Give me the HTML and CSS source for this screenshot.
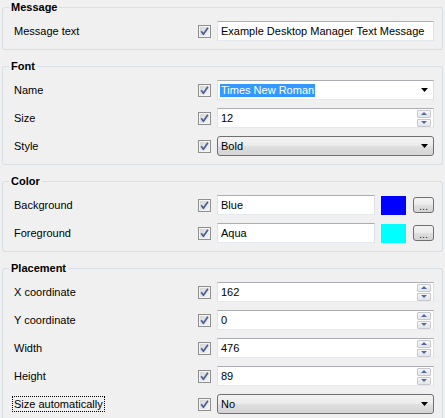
FILE: index.html
```html
<!DOCTYPE html>
<html>
<head>
<meta charset="utf-8">
<link rel="stylesheet" href="styles.css">
</head>
<body>
<svg width="0" height="0" style="position:absolute">
  <defs>
    <linearGradient id="cbg" x1="0" y1="0" x2="1" y2="1">
      <stop offset="0" stop-color="#d6d6d6"/>
      <stop offset="1" stop-color="#f4f4f4"/>
    </linearGradient>
    <symbol id="chk" viewBox="0 0 13 13">
      <rect x="0.5" y="0.5" width="12" height="12" fill="#f4f4f4" stroke="#8e8f8f"/>
      <rect x="2" y="2" width="9" height="9" fill="url(#cbg)"/>
      <path d="M3.2 6.2 L5.4 9.3 L9.9 2.8" fill="none" stroke="#4a5e96" stroke-width="1.7" stroke-linejoin="round"/>
    </symbol>
    <symbol id="arr" viewBox="0 0 7 4">
      <path d="M0 0 H7 L3.5 4 Z" fill="#000"/>
    </symbol>
  </defs>
</svg>

<fieldset class="group">
  <legend>Message</legend>
  <div class="rows">
    <span class="label">Message text</span>
    <svg class="check"><use href="#chk"/></svg>
    <div class="textbox">Example Desktop Manager Text Message</div>
  </div>
</fieldset>

<fieldset class="group">
  <legend>Font</legend>
  <div class="rows">
    <span class="label">Name</span>
    <svg class="check"><use href="#chk"/></svg>
    <div class="textbox edit-combo"><span class="sel">Times New Roman</span><svg class="arrow"><use href="#arr"/></svg></div>

    <span class="label">Size</span>
    <svg class="check"><use href="#chk"/></svg>
    <div class="textbox spinbox">12<span class="spin"><span class="sbtn up"></span><span class="sbtn down"></span></span></div>

    <span class="label">Style</span>
    <svg class="check"><use href="#chk"/></svg>
    <div class="combo">Bold<svg class="arrow"><use href="#arr"/></svg></div>
  </div>
</fieldset>

<fieldset class="group">
  <legend>Color</legend>
  <div class="rows">
    <span class="label">Background</span>
    <svg class="check"><use href="#chk"/></svg>
    <div class="colorrow">
      <div class="textbox">Blue</div>
      <span class="swatch blue"></span>
      <span class="dots">...</span>
    </div>

    <span class="label">Foreground</span>
    <svg class="check"><use href="#chk"/></svg>
    <div class="colorrow">
      <div class="textbox">Aqua</div>
      <span class="swatch aqua"></span>
      <span class="dots">...</span>
    </div>
  </div>
</fieldset>

<fieldset class="group">
  <legend>Placement</legend>
  <div class="rows">
    <span class="label">X coordinate</span>
    <svg class="check"><use href="#chk"/></svg>
    <div class="textbox spinbox">162<span class="spin"><span class="sbtn up"></span><span class="sbtn down"></span></span></div>

    <span class="label">Y coordinate</span>
    <svg class="check"><use href="#chk"/></svg>
    <div class="textbox spinbox">0<span class="spin"><span class="sbtn up"></span><span class="sbtn down"></span></span></div>

    <span class="label">Width</span>
    <svg class="check"><use href="#chk"/></svg>
    <div class="textbox spinbox">476<span class="spin"><span class="sbtn up"></span><span class="sbtn down"></span></span></div>

    <span class="label">Height</span>
    <svg class="check"><use href="#chk"/></svg>
    <div class="textbox spinbox">89<span class="spin"><span class="sbtn up"></span><span class="sbtn down"></span></span></div>

    <span class="label"><span class="focus">Size automatically</span></span>
    <svg class="check"><use href="#chk"/></svg>
    <div class="combo">No<svg class="arrow"><use href="#arr"/></svg></div>
  </div>
</fieldset>
</body>
</html>
```

FILE: styles.css
```css
html, body {
  margin: 0;
  background: #f0f0f0;
}
body {
  padding-top: 1px;
  width: 445px;
  height: 418px;
  overflow: hidden;
  font-family: "Liberation Sans", Arial, sans-serif;
  font-size: 11px;
  color: #000;
}

.group {
  margin: 0 2px;
  padding: 3px 8px 4px 11px;
  border: 1px solid #d5dfe5;
  border-radius: 3px;
  min-width: 0;
}
.group + .group {
  margin-top: 10px;
}
.group legend {
  font-weight: bold;
  line-height: 13px;
  padding: 0 2px;
  margin-left: -5px;
  color: #000;
}

.rows {
  display: grid;
  grid-template-columns: 178px 13px 1fr;
  grid-auto-rows: 28px;
  column-gap: 6px;
  align-items: center;
}

.label {
  line-height: 13px;
  white-space: nowrap;
}
.focus {
  outline: 1px dotted #000;
  outline-offset: 1px;
}

.check {
  width: 13px;
  height: 13px;
  display: block;
}

.textbox {
  box-sizing: border-box;
  height: 20px;
  background: #fff;
  border: 1px solid;
  border-color: #abadb3 #dbdfe6 #e3e9ef #e2e3ea;
  padding: 0 3px;
  display: flex;
  align-items: center;
  white-space: nowrap;
  min-width: 0;
}

.edit-combo {
  padding-left: 2px;
  padding-right: 5px;
}
.sel {
  background: #3399ff;
  color: #fff;
  line-height: 13px;
  padding: 0 1px;
}
.arrow {
  width: 7px;
  height: 4px;
  margin-left: auto;
  display: block;
}

.spinbox {
  padding-right: 2px;
}
.spin {
  margin-left: auto;
  display: flex;
  flex-direction: column;
  gap: 1px;
  width: 14px;
}
.sbtn {
  box-sizing: border-box;
  height: 8px;
  border: 1px solid #c6c9cf;
  border-radius: 1px;
  background: linear-gradient(#f6f6f6, #e2e4e8);
  display: flex;
  align-items: center;
  justify-content: center;
}
.sbtn::after {
  content: "";
  width: 0;
  height: 0;
  border-left: 3px solid transparent;
  border-right: 3px solid transparent;
}
.sbtn.up::after {
  border-bottom: 3px solid #5168a8;
}
.sbtn.down::after {
  border-top: 3px solid #5168a8;
}

.combo {
  box-sizing: border-box;
  height: 20px;
  border: 1px solid #707070;
  border-radius: 3px;
  background: linear-gradient(#f3f3f3 0%, #ececec 45%, #dedede 55%, #d4d4d4 100%);
  padding: 0 5px 0 3px;
  display: flex;
  align-items: center;
}

.colorrow {
  display: flex;
  align-items: center;
}
.colorrow .textbox {
  flex: 1;
}
.swatch {
  width: 25px;
  height: 19px;
  margin-left: 6px;
  flex: none;
}
.swatch.blue { background: #0000ff; }
.swatch.aqua { background: #00ffff; }
.dots {
  box-sizing: border-box;
  width: 21px;
  height: 16px;
  margin-left: 7px;
  flex: none;
  border: 1px solid #707070;
  border-radius: 3px;
  background: linear-gradient(#f3f3f3 0%, #ececec 45%, #dedede 55%, #d4d4d4 100%);
  font-size: 11px;
  line-height: 15px;
  padding-top: 1px;
  text-align: center;
  color: #4a1060;
  letter-spacing: 0;
}
```
